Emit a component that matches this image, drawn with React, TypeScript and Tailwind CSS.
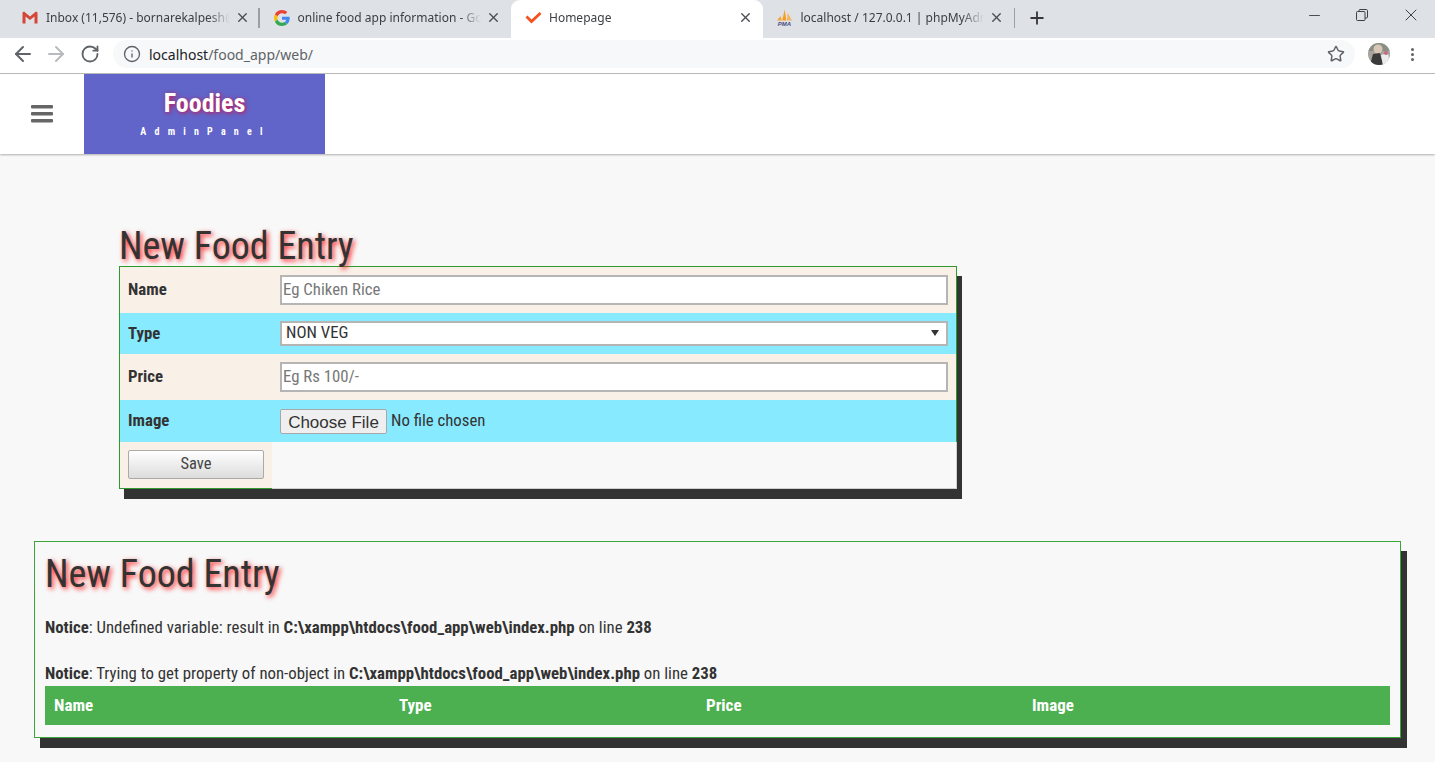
import { ArrowLeft, ArrowRight, Info, Minus, Plus, RotateCw, Star, X } from "lucide-react";

const TABS = [
  { title: "Inbox (11,576) - bornarekalpesh@gmail.com", icon: <GmailIcon />, divider: true },
  { title: "online food app information - Google Search", icon: <GoogleIcon /> },
  { title: "Homepage", icon: <CheckIcon />, active: true },
  { title: "localhost / 127.0.0.1 | phpMyAdmin", icon: <PmaIcon /> },
];

function GmailIcon() {
  return (
    <svg width="16" height="13" viewBox="0 0 16 13">
      <path d="M0.500 1.500V12.500H3.500V5.500L8 9L12.500 5.500V12.500H15.500V1.500L14 0.500L8 5.500L2 0.500Z" fill="#d44638" />
    </svg>
  );
}

function GoogleIcon() {
  return (
    <svg width="16" height="16" viewBox="0 0 48 48">
      <path fill="#EA4335" d="M24 9.500c3.500 0 6.700 1.200 9.200 3.600l6.900-6.900C35.900 2.400 30.500 0 24 0 14.600 0 6.500 5.400 2.600 13.200l8 6.200C12.500 13.600 17.800 9.500 24 9.500z" />
      <path fill="#4285F4" d="M47 24.500c0-1.600-.1-3.100-.4-4.500H24v9h12.900c-.6 3-2.200 5.500-4.700 7.200l7.700 6C44.400 38.100 47 31.900 47 24.500z" />
      <path fill="#FBBC05" d="M10.600 28.600c-.5-1.400-.8-3-.8-4.600s.3-3.200.8-4.600l-8-6.200C.9 16.500 0 20.100 0 24s.9 7.500 2.600 10.800l8-6.200z" />
      <path fill="#34A853" d="M24 48c6.500 0 11.900-2.100 15.900-5.800l-7.700-6c-2.200 1.400-4.900 2.300-8.200 2.300-6.200 0-11.500-4.200-13.400-9.800l-8 6.200C6.500 42.600 14.600 48 24 48z" />
    </svg>
  );
}

function CheckIcon() {
  return (
    <svg width="17" height="13" viewBox="0 0 17 13" className="shrink-0">
      <path d="M1.500 5.500L6.500 10.500L15.500 2" fill="none" stroke="#f4511e" strokeWidth="2.800" />
    </svg>
  );
}

function PmaIcon() {
  return (
    <svg width="17" height="17" viewBox="0 0 17 17" className="shrink-0">
      <path d="M1 11.500L4.500 7L5.800 11.500Z" fill="#f7a233" />
      <path d="M6.200 11.500L8.800 0.500L10.200 11.500Z" fill="#f89c1c" />
      <path d="M10.800 11.500L11.800 4L16 11.500Z" fill="#f8b45c" />
      <text x="8.500" y="16.500" textAnchor="middle" fontSize="6" fontWeight="700" fontStyle="italic" fontFamily="Liberation Sans" fill="#4a4f80">
        PMA
      </text>
    </svg>
  );
}

function RestoreIcon() {
  return (
    <svg width="12" height="12" viewBox="0 0 12 12" fill="none" stroke="#3c4043">
      <rect x="0.500" y="2.500" width="8.500" height="9" rx="1" />
      <path d="M3 2.500V1.500C3 1 3.300 0.500 4 0.500H10C11 0.500 11.500 1 11.500 2V8C11.500 8.700 11 9 10.500 9H9" />
    </svg>
  );
}

function Avatar() {
  return (
    <svg width="22" height="22" viewBox="0 0 22 22">
      <defs>
        <clipPath id="avatar-clip">
          <circle cx="11" cy="11" r="11" />
        </clipPath>
      </defs>
      <g clipPath="url(#avatar-clip)">
        <rect width="22" height="22" fill="#a8a49c" />
        <rect x="0" y="0" width="22" height="8" fill="#8a8f86" />
        <circle cx="10" cy="6" r="4.500" fill="#d8c7b4" />
        <path d="M2 22L5 11L12 10L15 22Z" fill="#3a3a3a" />
        <path d="M13 12L20 10L22 22H15Z" fill="#ececec" />
        <circle cx="18" cy="10" r="2" fill="#c06a85" />
      </g>
    </svg>
  );
}

function Tab({ title, icon, active, divider }: { title: string; icon: React.ReactNode; active?: boolean; divider?: boolean }) {
  return (
    <div
      className={`relative flex h-[38px] w-[251.500px] shrink-0 items-center pb-[3px] pl-[14px] pr-[10px] ${
        active ? "rounded-t-[9px] bg-white" : ""
      }`}
    >
      <span className="flex w-4 shrink-0 justify-center">{icon}</span>
      <span className="ml-[8px] min-w-0 flex-1 overflow-hidden whitespace-nowrap text-[12px] text-[#3c4043] [mask-image:linear-gradient(to_right,black_88%,transparent)]">
        {title}
      </span>
      <X size={15} strokeWidth={2.2} className="ml-[5px] shrink-0 text-[#4a4d51]" />
      {divider && <div className="absolute right-0 top-[8px] h-5 w-[2px] bg-[#9aa0a6]" />}
    </div>
  );
}

function ChromeBar() {
  return (
    <div className="font-['Noto_Sans',sans-serif] [font-stretch:normal]">
      <div className="flex h-[38px] items-start bg-[#dee1e6] pl-2">
        {TABS.map((tab) => (
          <Tab key={tab.title} title={tab.title} icon={tab.icon} active={tab.active} divider={tab.divider} />
        ))}
        <div className="mt-[8px] h-5 w-px bg-[#9aa0a6]" />
        <Plus size={20} strokeWidth={2.2} className="ml-[12px] mt-[8px] text-[#35363a]" />
        <div className="ml-auto flex h-[30px] items-center gap-[33px] pr-[14px] text-[#3c4043]">
          <Minus size={17} strokeWidth={1.3} />
          <RestoreIcon />
          <X size={20} strokeWidth={1.2} />
        </div>
      </div>
      <div className="flex h-[36px] items-center border-b border-[#bdbdbd] bg-white pb-[3px] pl-[11px] pr-[21px]">
        <ArrowLeft size={24} strokeWidth={2} className="text-[#5f6368]" />
        <ArrowRight size={24} strokeWidth={2} className="ml-[9px] text-[#b8babd]" />
        <RotateCw size={20} strokeWidth={2.2} className="ml-[12px] text-[#5f6368]" />
        <div className="ml-[13px] flex h-[28px] flex-1 items-center rounded-full bg-[#f7f8f9] pl-[10px] pr-[10px]">
          <Info size={18} strokeWidth={1.8} className="text-[#5f6368]" />
          <span className="ml-[8px] text-[14px] text-[#5f6368]">
            <span className="text-[#202124]">localhost</span>/food_app/web/
          </span>
          <Star size={18} strokeWidth={2} className="ml-auto text-[#5f6368]" />
        </div>
        <div className="ml-[13px]">
          <Avatar />
        </div>
        <div className="ml-[21px] flex flex-col gap-[2px]">
          <span className="h-[3px] w-[3px] rounded-full bg-[#5f6368]" />
          <span className="h-[3px] w-[3px] rounded-full bg-[#5f6368]" />
          <span className="h-[3px] w-[3px] rounded-full bg-[#5f6368]" />
        </div>
      </div>
    </div>
  );
}

function Heading() {
  return (
    <h2 className="text-[38px] leading-[40px] text-[#333] [text-shadow:2px_2px_5px_#ff2020]">New Food Entry</h2>
  );
}

function Row({ label, blue, height, children }: { label: string; blue?: boolean; height: string; children: React.ReactNode }) {
  return (
    <div className={`flex items-center border-r border-[#2e9a2e] ${height} ${blue ? "bg-[#88eaff]" : "bg-[#f9f0e8]"}`}>
      <div className="w-[152px] shrink-0 pl-2 text-[16.800px] font-bold text-[#333]">{label}</div>
      <div className="flex min-w-0 flex-1 items-center pl-2 pr-2">{children}</div>
    </div>
  );
}

function TextField({ placeholder }: { placeholder: string }) {
  return (
    <input
      placeholder={placeholder}
      className="h-[30px] w-full border-2 border-[#b5b5b5] bg-white pb-[2px] pl-[1px] text-[16.800px] text-[#333] outline-none placeholder:text-[#777]"
    />
  );
}

export default function App() {
  return (
    <div className="flex min-h-[762px] flex-col overflow-hidden bg-[#f8f8f8] font-['Roboto',sans-serif] [font-stretch:condensed]">
      <ChromeBar />

      <header className="flex h-[80px] items-center bg-white shadow-[0_1px_2px_rgba(0,0,0,0.3)]">
        <div className="flex w-[84px] justify-center">
          <svg width="24" height="18" viewBox="0 0 24 18" fill="#666">
            <rect width="22" height="3.500" x="1" y="0" rx="1" />
            <rect width="22" height="3.500" x="1" y="7" rx="1" />
            <rect width="22" height="3.500" x="1" y="14" rx="1" />
          </svg>
        </div>
        <div className="flex h-full w-[241px] flex-col items-center bg-[#6164c8] text-white">
          <span className="mt-[14px] text-[26px] font-bold leading-[30px] [text-shadow:1px_1px_4px_#d0104c]">Foodies</span>
          <span className="mt-[8px] pl-[2px] text-[10px] font-bold leading-[12px] tracking-[8.200px]">AdminPanel</span>
        </div>
      </header>

      <main className="flex flex-col">
        <section className="ml-[119px] mt-[72px] w-[838px]">
          <Heading />
          <div className="border-l border-t border-[#2e9a2e] shadow-[5px_10px_0_#333]">
            <Row label="Name" height="h-[46px]">
              <TextField placeholder="Eg Chiken Rice" />
            </Row>
            <Row label="Type" blue height="h-[41px]">
              <div className="relative flex h-[25px] w-full items-center border-2 border-[#b5b5b5] bg-white pb-[1px] pl-[4px] text-[16.800px] text-[#333]">
                NON VEG
                <svg width="8" height="6" viewBox="0 0 8 6" className="absolute right-[7px] top-[7px]">
                  <path d="M0 0H8L4 6Z" fill="#333" />
                </svg>
              </div>
            </Row>
            <Row label="Price" height="h-[46px]">
              <TextField placeholder="Eg Rs 100/-" />
            </Row>
            <Row label="Image" blue height="h-[42px]">
              <div className="flex items-center text-[16.800px] text-[#333]">
                <button className="h-[25px] w-[107px] rounded-[2px] border border-[#a8a8a8] bg-[#efefef] pb-[2px] font-['Liberation_Sans',sans-serif] text-[17px] [font-stretch:normal]">
                  Choose File
                </button>
                <span className="ml-1">No file chosen</span>
              </div>
            </Row>
            <div className="flex h-[47px] bg-[#f8f8f8]">
              <div className="flex w-[152px] items-center border-b border-[#2e9a2e] bg-[#f9f0e8] pb-[1px] pl-2">
                <button className="h-[29px] w-[136px] rounded-[2px] border border-[#aaa] bg-gradient-to-b from-white to-[#dcdcdc] text-[16.500px] text-[#444]">
                  Save
                </button>
              </div>
              <div className="flex-1 border-b border-r border-[#cfcfcf]" />
            </div>
          </div>
        </section>

        <section className="ml-[34px] mt-[52px] w-[1367px] border border-[#3aa63a] bg-[#f8f8f8] px-[10px] pb-[12px] pt-[12px] shadow-[6px_10px_0_#333]">
          <Heading />
          <p className="mt-[23px] text-[16.800px] leading-[20px] text-[#333]">
            <b>Notice</b>: Undefined variable: result in <b>C:\xampp\htdocs\food_app\web\index.php</b> on line <b>238</b>
          </p>
          <p className="mb-[3px] mt-[26px] text-[16.800px] leading-[20px] text-[#333]">
            <b>Notice</b>: Trying to get property of non-object in <b>C:\xampp\htdocs\food_app\web\index.php</b> on line <b>238</b>
          </p>
          <div className="flex h-[39px] items-center bg-[#4caf50] text-[17px] font-bold text-white">
            <span className="w-[354px] pl-[9px]">Name</span>
            <span className="w-[307px]">Type</span>
            <span className="w-[326px]">Price</span>
            <span>Image</span>
          </div>
        </section>
      </main>
    </div>
  );
}
